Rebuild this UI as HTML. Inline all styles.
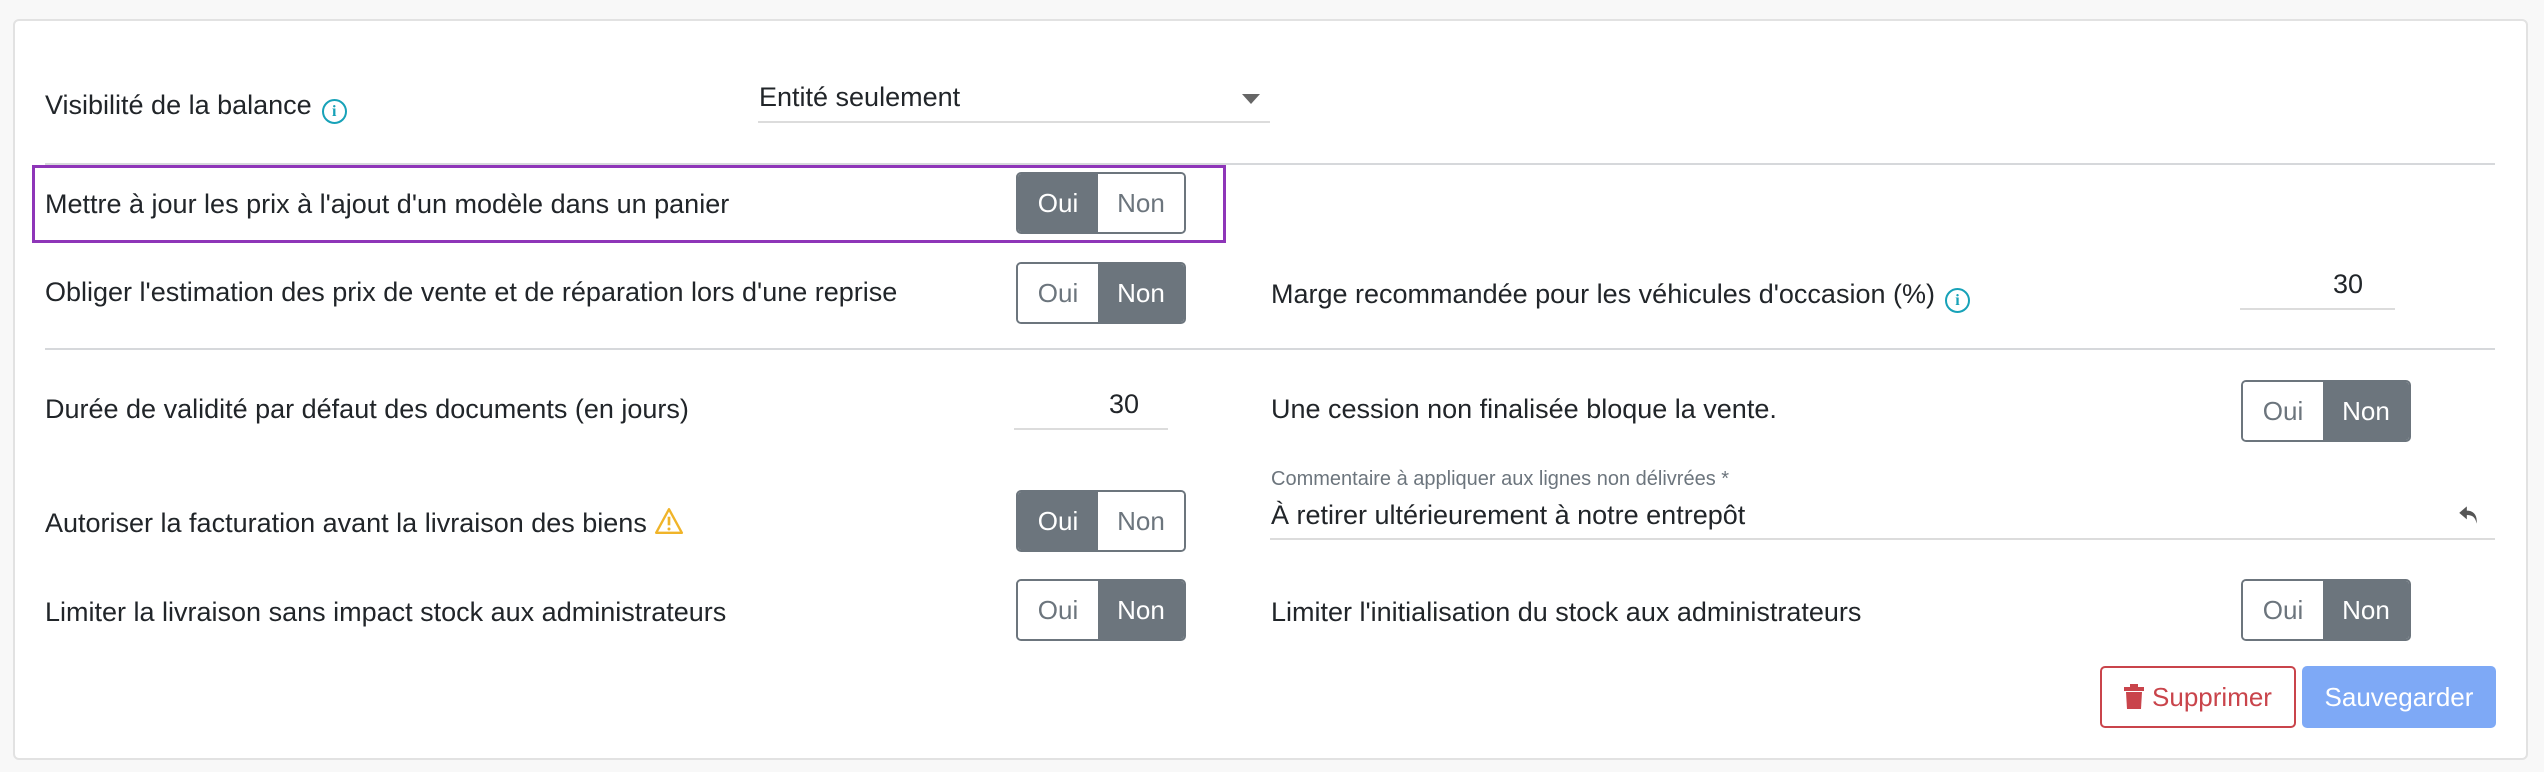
<!DOCTYPE html>
<html><head><meta charset="utf-8"><style>
*{box-sizing:border-box;margin:0;padding:0}
body{width:2544px;height:772px;background:#f8f8f8;font-family:"Liberation Sans",sans-serif;color:#212529;position:relative;overflow:hidden}
.card{position:absolute;left:13px;top:19px;width:2515px;height:741px;background:#fff;border:2px solid #e2e2e2;border-radius:6px}
.a{position:absolute;white-space:nowrap}
.t{font-size:27px;line-height:30px}
.hr{position:absolute;height:2px;background:#d6d8db}
.tg{position:absolute;width:170px;height:62px;border:2px solid #6c757d;border-radius:5px;display:flex;overflow:hidden;font-size:26px}
.tg div{flex:1;display:flex;align-items:center;justify-content:center;color:#6c757d;background:#fff}
.tg div.on{background:#6c757d;color:#fff}
.tg div:first-child{flex:0 0 80px}
.ul{position:absolute;height:2px;background:#dcdcdc}
.info{display:inline-block;width:25px;height:25px;border:2px solid #17a2b8;border-radius:50%;color:#17a2b8;font-size:16px;line-height:21px;text-align:center;font-weight:bold;vertical-align:-2px;margin-left:10px;font-family:"Liberation Serif",serif}
</style></head><body>
<div class="card"></div>

<div class="a t" style="left:45px;top:90px">Visibilité de la balance<span class="info">i</span></div>
<div class="a t" style="left:759px;top:82px">Entité seulement</div>
<div class="a" style="left:1242px;top:94px;width:0;height:0;border-left:9px solid transparent;border-right:9px solid transparent;border-top:10px solid #666"></div>
<div class="ul" style="left:758px;top:121px;width:512px"></div>

<div class="hr" style="left:45px;top:163px;width:2450px"></div>
<div class="a" style="left:32px;top:165px;width:1194px;height:78px;border:3px solid #8e35b8"></div>
<div class="a t" style="left:45px;top:189px">Mettre à jour les prix à l'ajout d'un modèle dans un panier</div>
<div class="tg" style="left:1016px;top:172px"><div class="on">Oui</div><div>Non</div></div>

<div class="a t" style="left:45px;top:277px">Obliger l'estimation des prix de vente et de réparation lors d'une reprise</div>
<div class="tg" style="left:1016px;top:262px"><div>Oui</div><div class="on">Non</div></div>
<div class="a t" style="left:1271px;top:279px">Marge recommandée pour les véhicules d'occasion (%)<span class="info">i</span></div>
<div class="a t" style="left:2333px;top:269px">30</div>
<div class="ul" style="left:2240px;top:308px;width:155px"></div>

<div class="hr" style="left:45px;top:348px;width:2450px"></div>

<div class="a t" style="left:45px;top:394px">Durée de validité par défaut des documents (en jours)</div>
<div class="a t" style="left:1109px;top:389px">30</div>
<div class="ul" style="left:1014px;top:428px;width:154px"></div>
<div class="a t" style="left:1271px;top:394px">Une cession non finalisée bloque la vente.</div>
<div class="tg" style="left:2241px;top:380px"><div>Oui</div><div class="on">Non</div></div>

<div class="a" style="left:1271px;top:468px;font-size:20px;color:#6c757d">Commentaire à appliquer aux lignes non délivrées *</div>
<div class="a t" style="left:1271px;top:500px">À retirer ultérieurement à notre entrepôt</div>
<svg class="a" style="left:2456px;top:502px" width="26" height="26" viewBox="0 0 24 24"><path d="M10 4 L3 10 L10 16 V12 C15 12 18 14 19 20 C20 12 16 8 10 8 Z" fill="#555"/></svg>
<div class="ul" style="left:1270px;top:538px;width:1225px"></div>

<div class="a t" style="left:45px;top:507px">Autoriser la facturation avant la livraison des biens <svg width="30" height="28" viewBox="0 0 28 26" style="vertical-align:-3px"><path d="M14 2 L26 24 H2 Z" fill="none" stroke="#f0b429" stroke-width="2.2" stroke-linejoin="round"/><path d="M14 9 V17" stroke="#f0b429" stroke-width="2.5"/><circle cx="14" cy="20.5" r="1.4" fill="#f0b429"/></svg></div>
<div class="tg" style="left:1016px;top:490px"><div class="on">Oui</div><div>Non</div></div>

<div class="a t" style="left:45px;top:597px">Limiter la livraison sans impact stock aux administrateurs</div>
<div class="tg" style="left:1016px;top:579px"><div>Oui</div><div class="on">Non</div></div>
<div class="a t" style="left:1271px;top:597px">Limiter l'initialisation du stock aux administrateurs</div>
<div class="tg" style="left:2241px;top:579px"><div>Oui</div><div class="on">Non</div></div>

<div class="a" style="left:2100px;top:666px;width:196px;height:62px;border:2px solid #c9444b;border-radius:5px;color:#c9444b;font-size:26px;display:flex;align-items:center;justify-content:center;gap:8px">
<svg width="20" height="26" viewBox="0 0 20 26"><rect x="0" y="3" width="20" height="4" fill="#c9444b"/><rect x="6" y="0" width="8" height="4" fill="#c9444b"/><path d="M2 8 H18 L17 25 H3 Z" fill="#c9444b"/></svg>Supprimer</div>
<div class="a" style="left:2302px;top:666px;width:194px;height:62px;background:#7ea9f6;border-radius:5px;color:#fff;font-size:26px;display:flex;align-items:center;justify-content:center">Sauvegarder</div>
</body></html>
